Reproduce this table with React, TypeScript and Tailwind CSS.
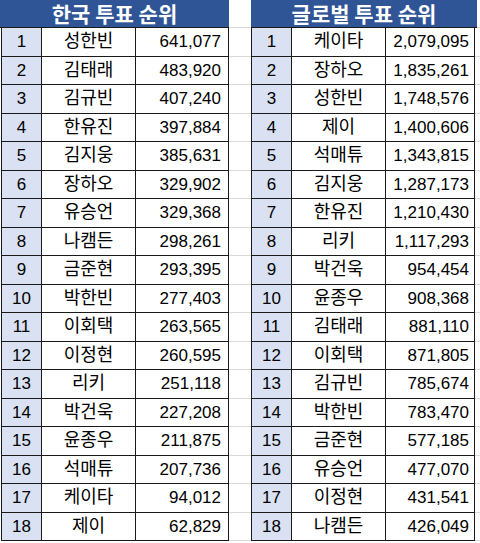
import React from 'react';

// name, votes
type Row = [string, string];

const korea: Row[] = [
  ['성한빈', '641,077'],
  ['김태래', '483,920'],
  ['김규빈', '407,240'],
  ['한유진', '397,884'],
  ['김지웅', '385,631'],
  ['장하오', '329,902'],
  ['유승언', '329,368'],
  ['나캠든', '298,261'],
  ['금준현', '293,395'],
  ['박한빈', '277,403'],
  ['이회택', '263,565'],
  ['이정현', '260,595'],
  ['리키', '251,118'],
  ['박건욱', '227,208'],
  ['윤종우', '211,875'],
  ['석매튜', '207,736'],
  ['케이타', '94,012'],
  ['제이', '62,829'],
];

const global: Row[] = [
  ['케이타', '2,079,095'],
  ['장하오', '1,835,261'],
  ['성한빈', '1,748,576'],
  ['제이', '1,400,606'],
  ['석매튜', '1,343,815'],
  ['김지웅', '1,287,173'],
  ['한유진', '1,210,430'],
  ['리키', '1,117,293'],
  ['박건욱', '954,454'],
  ['윤종우', '908,368'],
  ['김태래', '881,110'],
  ['이회택', '871,805'],
  ['김규빈', '785,674'],
  ['박한빈', '783,470'],
  ['금준현', '577,185'],
  ['유승언', '477,070'],
  ['이정현', '431,541'],
  ['나캠든', '426,049'],
];

export default function App() {
  return (
    <div
      className="w-[480px] h-[543px] bg-white text-black overflow-hidden"
      style={{ fontFamily: '"Liberation Sans", "Noto Sans CJK KR", sans-serif' }}
    >
      {/* header row */}
      <div className="flex h-[28px]">
        <div className="w-[229px] bg-[#2f5597] border-b border-[#1a1a1a] flex items-center justify-center text-white font-bold text-[21px] leading-[27px]" style={{ fontFamily: '"Noto Sans CJK KR", sans-serif' }}>
          한국 투표 순위
        </div>
        <div className="w-[22px] border-b border-[#d9d9d9]" />
        <div className="w-[226px] bg-[#2f5597] border-b border-[#1a1a1a] flex items-center justify-center text-white font-bold text-[21px] leading-[27px]" style={{ fontFamily: '"Noto Sans CJK KR", sans-serif' }}>
          글로벌 투표 순위
        </div>
        <div className="flex-1 border-b border-[#d9d9d9]" />
      </div>

      {korea.map((k, i) => {
        const g = global[i];
        return (
          <div key={i} className="flex h-[28.5px]">
            <div className="ml-[1px] w-[41px] bg-[#d9e1f2] border-l border-r border-b border-[#1a1a1a] flex items-center justify-center text-[17px]">
              {i + 1}
            </div>
            <div className="w-[94px] border-r border-b border-[#1a1a1a] flex items-center justify-center text-[18px]">
              {k[0]}
            </div>
            <div className="w-[93px] border-r border-b border-[#1a1a1a] flex items-center justify-end pr-[7px] text-[17px]">
              {k[1]}
            </div>
            <div className="w-[22px] border-b border-[#d9d9d9]" />
            <div className="w-[41px] bg-[#d9e1f2] border-l border-r border-b border-[#1a1a1a] flex items-center justify-center text-[17px]">
              {i + 1}
            </div>
            <div className="w-[94px] border-r border-b border-[#1a1a1a] flex items-center justify-center text-[18px]">
              {g[0]}
            </div>
            <div className="w-[89px] border-r border-b border-[#1a1a1a] flex items-center justify-end pr-[5px] text-[17px]">
              {g[1]}
            </div>
            <div className="flex-1 border-b border-[#d9d9d9]" />
          </div>
        );
      })}
    </div>
  );
}
